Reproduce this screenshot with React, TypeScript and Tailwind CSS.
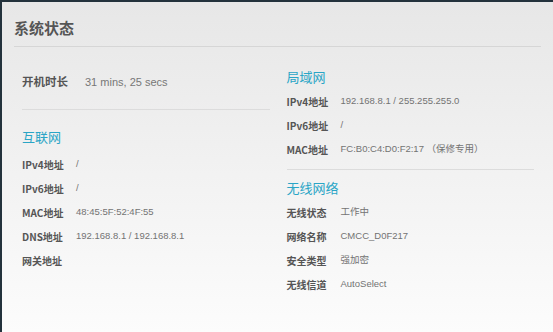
const cjk = "font-['Microsoft_YaHei','Noto_Sans_CJK_SC',sans-serif]";
const latin = "font-['Liberation_Sans','Noto_Sans_CJK_SC',sans-serif]";

const Row = ({label, value} : {label: string, value: string}) => (
    <div className="flex h-[24px] items-center">
        <span className={`${cjk} w-[54px] shrink-0 text-[10px] font-bold text-[#555]`}>{label}</span>
        <span className={`${latin} pt-px text-[9.5px] text-[#737373]`}>{value}</span>
    </div>
)

const Heading = ({children, className = ""} : {children: string, className?: string}) => (
    <h2 className={`${cjk} h-[24px] flex items-center text-[13px] text-[#2aa5c6] ${className}`}>{children}</h2>
)

export default function App() {
    return (
        <div className="w-[553px] h-[332px] border-t-2 border-l-2 border-[#23323c] bg-gradient-to-b from-[#e7e7e7] to-[#fcfcfc] overflow-hidden">
            <div className="mx-[12px] border-b border-[#d6d6d6] pt-[17px] pb-[9px]">
                <h1 className={`${cjk} text-[15px] leading-[18px] font-bold text-[#555]`}>系统状态</h1>
            </div>
            <div className="grid grid-cols-2 gap-[17px] pl-[20px] pr-[19px]">
                <div className="pt-[23px]">
                    <div className="flex h-[24px] items-center">
                        <span className={`${cjk} w-[63px] shrink-0 text-[11.5px] font-bold text-[#555]`}>开机时长</span>
                        <span className={`${latin} text-[11px] text-[#777]`}>31 mins, 25 secs</span>
                    </div>
                    <div className="mt-[15px] border-b border-[#dcdcdc]"></div>
                    <Heading className="mt-[15px] mb-[3px]">互联网</Heading>
                    <Row label="IPv4地址" value="/" />
                    <Row label="IPv6地址" value="/" />
                    <Row label="MAC地址" value="48:45:5F:52:4F:55" />
                    <Row label="DNS地址" value="192.168.8.1 / 192.168.8.1" />
                    <Row label="网关地址" value="" />
                </div>
                <div className="pt-[18px]">
                    <Heading>局域网</Heading>
                    <Row label="IPv4地址" value="192.168.8.1 / 255.255.255.0" />
                    <Row label="IPv6地址" value="/" />
                    <Row label="MAC地址" value="FC:B0:C4:D0:F2:17 （保修专用）" />
                    <div className="mt-[8px] border-b border-[#dcdcdc]"></div>
                    <Heading className="mt-[6px]">无线网络</Heading>
                    <Row label="无线状态" value="工作中" />
                    <Row label="网络名称" value="CMCC_D0F217" />
                    <Row label="安全类型" value="强加密" />
                    <Row label="无线信道" value="AutoSelect" />
                </div>
            </div>
        </div>
    )
}
